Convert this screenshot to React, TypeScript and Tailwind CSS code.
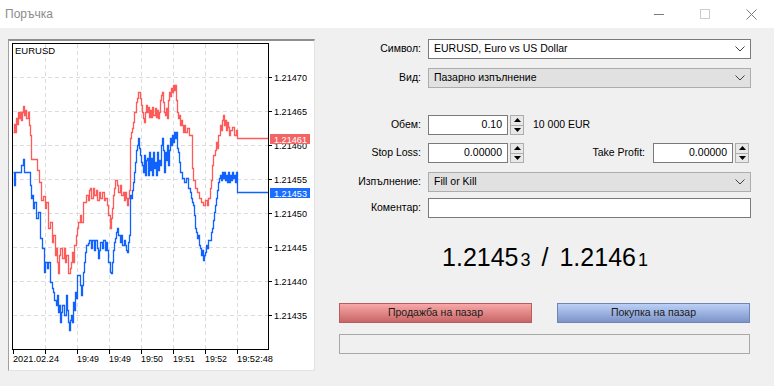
import React from "react";

type P = [number, number];

const RED: P[] = [[13,132],[14,124],[15,132],[16,118],[17,124],[18,112],[19,118],[20,112],[21,120],[22,112],[23,106],[24,115],[25,110],[26,118],[28,112],[29,125],[30,135],[31,159],[36,159],[37,170],[39,182],[41,200],[43,196],[45,208],[46,202],[48,228],[50,222],[52,242],[53,235],[55,255],[56,248],[57,262],[58,273],[59,255],[60,248],[62,258],[64,248],[65,262],[66,255],[68,273],[70,268],[71,262],[72,252],[73,262],[74,245],[76,235],[77,228],[78,222],[80,215],[81,222],[83,202],[85,202],[86,195],[88,200],[89,190],[90,188],[91,198],[93,188],[94,195],[96,190],[97,200],[99,192],[100,198],[102,192],[104,200],[105,198],[107,205],[108,215],[110,228],[111,218],[112,208],[113,195],[114,188],[115,180],[117,185],[118,192],[120,185],[121,195],[123,192],[124,200],[125,192],[126,198],[127,205],[128,198],[129,190],[130,138],[131,132],[132,128],[133,122],[134,112],[136,102],[137,98],[138,92],[140,98],[141,105],[142,112],[143,118],[144,122],[145,112],[146,105],[147,112],[148,107],[149,117],[150,110],[151,117],[152,107],[153,115],[155,108],[156,117],[157,110],[158,118],[159,112],[160,100],[161,95],[162,92],[163,102],[164,112],[165,115],[166,108],[167,118],[168,100],[169,92],[170,96],[171,88],[172,92],[173,85],[174,90],[175,85],[176,100],[177,112],[178,118],[179,115],[180,125],[181,120],[182,125],[183,132],[184,125],[185,132],[187,128],[189,135],[191,135],[192,168],[193,180],[195,188],[197,192],[199,198],[201,202],[203,205],[205,200],[207,205],[208,198],[210,188],[211,180],[212,165],[213,155],[215,150],[216,142],[217,148],[218,135],[220,125],[221,130],[222,120],[223,115],[224,125],[225,120],[226,130],[227,122],[228,127],[229,135],[230,130],[232,127],[234,135],[236,130],[237,138],[268,138]];

const BLUE: P[] = [[13,172],[14,185],[15,172],[17,172],[19,172],[21,165],[23,159],[24,172],[27,172],[29,172],[30,185],[31,198],[32,195],[33,208],[34,202],[36,218],[38,212],[40,238],[42,248],[44,272],[45,262],[47,268],[48,262],[50,282],[52,288],[53,292],[54,300],[56,305],[57,295],[58,312],[59,305],[60,322],[61,312],[62,305],[64,315],[66,295],[67,310],[68,322],[69,330],[70,320],[71,315],[72,322],[73,302],[74,310],[75,292],[76,298],[77,275],[79,275],[80,285],[81,295],[82,285],[83,272],[84,262],[85,252],[86,245],[88,243],[89,240],[91,248],[92,240],[94,250],[95,240],[97,248],[98,258],[99,250],[100,242],[102,248],[103,240],[105,250],[106,242],[107,250],[108,262],[110,272],[111,273],[112,262],[113,250],[114,242],[115,238],[116,232],[117,228],[118,235],[120,242],[121,235],[122,245],[124,240],[125,245],[126,250],[127,252],[128,242],[129,235],[130,195],[131,198],[132,190],[133,182],[134,172],[135,162],[136,150],[137,145],[138,138],[139,148],[140,155],[141,162],[142,165],[143,172],[144,155],[145,175],[146,160],[147,158],[148,175],[149,152],[150,170],[151,158],[152,175],[153,152],[154,168],[155,162],[156,175],[157,152],[158,170],[159,160],[160,165],[161,145],[162,138],[163,150],[164,172],[165,152],[166,160],[167,145],[168,165],[169,150],[170,138],[171,145],[172,135],[173,142],[174,132],[175,138],[176,132],[177,148],[178,152],[179,162],[180,172],[182,178],[184,182],[186,178],[188,188],[190,192],[191,198],[192,202],[193,205],[194,215],[195,228],[196,232],[197,238],[198,235],[199,245],[200,248],[201,255],[202,250],[203,260],[204,255],[205,252],[206,245],[207,248],[208,240],[210,240],[211,232],[212,228],[213,220],[214,212],[215,205],[216,198],[217,190],[218,182],[219,178],[220,175],[221,180],[222,172],[223,178],[224,172],[225,180],[226,175],[227,182],[228,172],[229,182],[230,175],[231,180],[232,172],[233,178],[234,175],[235,182],[236,172],[237,192],[268,192]];

function stepPath(pts: P[]) {
  let d = `M${pts[0][0] + 0.5} ${pts[0][1] + 0.5}`;
  for (let i = 1; i < pts.length; i++) {
    d += ` H${pts[i][0] + 0.5} V${pts[i][1] + 0.5}`;
  }
  return d;
}

const PRICES = [
  ["1.21470", 77],
  ["1.21465", 111],
  ["1.21460", 145],
  ["1.21455", 179],
  ["1.21450", 213],
  ["1.21445", 247],
  ["1.21440", 281],
  ["1.21435", 315],
] as const;

const VX = [45, 77, 109, 141, 173, 205, 237];
const TIMES: [string, number, number][] = [
  ["2021.02.24", 13, 46],
  ["19:49", 77, 22],
  ["19:49", 109, 22],
  ["19:50", 141, 22],
  ["19:51", 173, 22],
  ["19:52", 205, 22],
  ["19:52:48", 237, 36],
];

const FONT = "'Liberation Sans', Arial, sans-serif";

function Chart() {
  return (
    <svg width={305} height={329} viewBox="9 41 305 329" style={{ display: "block" }}>
      <defs>
        <clipPath id="frame">
          <rect x={13} y={44} width={255} height={305} />
        </clipPath>
      </defs>
      {PRICES.map(([, y]) => (
        <line key={y} x1={13} x2={268} y1={y + 0.5} y2={y + 0.5} stroke="#dcdcdc" strokeDasharray="4 3" />
      ))}
      {VX.map((x) => (
        <line key={x} x1={x + 0.5} x2={x + 0.5} y1={44} y2={349} stroke="#dcdcdc" strokeDasharray="4 3" />
      ))}
      <g clipPath="url(#frame)" fill="none" strokeWidth={1.3}>
        <path d={stepPath(RED)} stroke="#ff5a5a" />
        <path d={stepPath(BLUE)} stroke="#0f62fe" />
      </g>
      <rect x={12.5} y={43.5} width={256} height={306} fill="none" stroke="#000" strokeWidth={1} />
      <text x={15} y={53.5} fontFamily={FONT} fontSize={9.5} fill="#000">EURUSD</text>
      {PRICES.map(([t, y]) => (
        <g key={t}>
          <line x1={268} x2={272} y1={y + 0.5} y2={y + 0.5} stroke="#000" />
          <text x={274} y={y + 4} fontFamily={FONT} fontSize={9.5} fill="#000" textLength={33} lengthAdjust="spacingAndGlyphs">{t}</text>
        </g>
      ))}
      <rect x={270} y={134} width={40} height={10} fill="#f26464" />
      <text x={274} y={142.5} fontFamily={FONT} fontSize={9.5} fill="#fff" textLength={33} lengthAdjust="spacingAndGlyphs">1.21461</text>
      <rect x={270} y={188} width={40} height={10} fill="#1a6dff" />
      <text x={274} y={196.5} fontFamily={FONT} fontSize={9.5} fill="#fff" textLength={33} lengthAdjust="spacingAndGlyphs">1.21453</text>
      {[13, ...VX].map((x) => (
        <line key={x} x1={x + 0.5} x2={x + 0.5} y1={349} y2={354} stroke="#000" />
      ))}
      {TIMES.map(([t, x, w], i) => (
        <text key={i} x={x} y={361.5} fontFamily={FONT} fontSize={9.5} fill="#000" textLength={w} lengthAdjust="spacingAndGlyphs">{t}</text>
      ))}
    </svg>
  );
}

function Chevron() {
  return (
    <svg width="10" height="6" viewBox="0 0 10 6">
      <path d="M0.5 0.5 L5 5 L9.5 0.5" stroke="#404040" fill="none" strokeWidth={1} />
    </svg>
  );
}

function Spinner() {
  return (
    <div className="ml-[2px] flex h-[20px] w-[14px] flex-col border border-[#adadad] bg-[#e8e8e8]">
      <div className="flex flex-1 items-center justify-center border-b border-[#adadad]">
        <svg width="7" height="4" viewBox="0 0 7 4"><path d="M3.5 0 L7 4 L0 4 Z" fill="#000" /></svg>
      </div>
      <div className="flex flex-1 items-center justify-center">
        <svg width="7" height="4" viewBox="0 0 7 4"><path d="M0 0 L7 0 L3.5 4 Z" fill="#000" /></svg>
      </div>
    </div>
  );
}

function Label({ children }: { children: React.ReactNode }) {
  return <div className="w-[82px] shrink-0 pr-0 text-right">{children}</div>;
}

function NumInput({ value }: { value: string }) {
  return (
    <div className="flex h-[20px] w-[80px] items-center justify-end border border-[#7a7a7a] bg-white pr-[5px]">
      {value}
    </div>
  );
}

export default function App() {
  return (
    <div
      className="flex h-[386px] w-[774px] flex-col overflow-hidden bg-[#f0f0f0] text-[10.5px] text-[#000]"
      style={{ fontFamily: FONT }}
    >
      {/* title bar */}
      <div className="flex h-[28px] shrink-0 items-center bg-white">
        <div className="ml-[5px] text-[12px] text-[#8c8c8c]">Поръчка</div>
        <div className="flex-1" />
        <div className="flex h-full w-[46px] items-center justify-center">
          <div className="h-px w-[10px] bg-[#7a7a7a]" />
        </div>
        <div className="flex h-full w-[46px] items-center justify-center">
          <div className="h-[10px] w-[10px] border border-[#cccccc]" />
        </div>
        <div className="flex h-full w-[46px] items-center justify-center">
          <svg width="11" height="11" viewBox="0 0 11 11">
            <path d="M0.5 0.5 L10.5 10.5 M10.5 0.5 L0.5 10.5" stroke="#7a7a7a" strokeWidth={1} />
          </svg>
        </div>
      </div>

      {/* body */}
      <div className="flex pl-[8px] pt-[11px]">
        <div className="h-[332px] w-[307px] shrink-0 border-b border-l border-r border-t-2 border-b-[#e3e3e3] border-l-[#a0a0a0] border-r-[#e3e3e3] border-t-[#8f8f8f] bg-white">
          <Chart />
        </div>

        <div className="ml-[24px] flex w-[412px] flex-col">
          {/* Symbol */}
          <div className="flex h-[20px] items-center">
            <Label>Символ:</Label>
            <div className="ml-[7px] flex h-[20px] flex-1 items-center justify-between border border-[#7a7a7a] bg-white pl-[5px] pr-[5px]">
              <span>EURUSD, Euro vs US Dollar</span>
              <Chevron />
            </div>
          </div>
          {/* Type */}
          <div className="mt-[9px] flex h-[20px] items-center">
            <Label>Вид:</Label>
            <div className="ml-[7px] flex h-[20px] flex-1 items-center justify-between border border-[#adadad] bg-[#e1e1e1] pl-[5px] pr-[5px]">
              <span>Пазарно изпълнение</span>
              <Chevron />
            </div>
          </div>
          {/* Volume */}
          <div className="mt-[27px] flex h-[20px] items-center">
            <Label>Обем:</Label>
            <div className="ml-[7px] flex items-center">
              <NumInput value="0.10" />
              <Spinner />
              <span className="ml-[9px]">10 000 EUR</span>
            </div>
          </div>
          {/* SL / TP */}
          <div className="mt-[8px] flex h-[20px] items-center">
            <Label>Stop Loss:</Label>
            <div className="ml-[7px] flex items-center">
              <NumInput value="0.00000" />
              <Spinner />
            </div>
            <div className="w-[121px] text-right">Take Profit:</div>
            <div className="ml-[8px] flex items-center">
              <NumInput value="0.00000" />
              <Spinner />
            </div>
          </div>
          {/* Execution */}
          <div className="mt-[9px] flex h-[20px] items-center">
            <Label>Изпълнение:</Label>
            <div className="ml-[7px] flex h-[20px] flex-1 items-center justify-between border border-[#adadad] bg-[#e1e1e1] pl-[5px] pr-[5px]">
              <span>Fill or Kill</span>
              <Chevron />
            </div>
          </div>
          {/* Comment */}
          <div className="mt-[6px] flex h-[20px] items-center">
            <Label>Коментар:</Label>
            <div className="ml-[7px] h-[20px] flex-1 border border-[#7a7a7a] bg-white" />
          </div>

          {/* price */}
          <div className="mt-[24px] h-[30px] text-center text-[25px] leading-[30px] text-black">
            <span>1.2145</span>
            <span className="ml-[2px] text-[18px]">3</span>
            <span className="mx-[11px]">/</span>
            <span>1.2146</span>
            <span className="ml-[2px] text-[18px]">1</span>
          </div>

          {/* buttons */}
          <div className="mt-[31px] flex w-[411px] justify-between">
            <div className="flex h-[20px] w-[193px] items-center justify-center border border-[#b85c5c] bg-gradient-to-b from-[#f8a8a8] to-[#c86666] text-[#1a1a1a]">
              Продажба на пазар
            </div>
            <div className="flex h-[20px] w-[193px] items-center justify-center border border-[#6f84b8] bg-gradient-to-b from-[#bcd0f6] to-[#7c94c8] text-[#1a1a1a]">
              Покупка на пазар
            </div>
          </div>
          <div className="mt-[11px] h-[20px] w-[411px] border border-[#a8a8a8]" />
        </div>
      </div>
    </div>
  );
}
